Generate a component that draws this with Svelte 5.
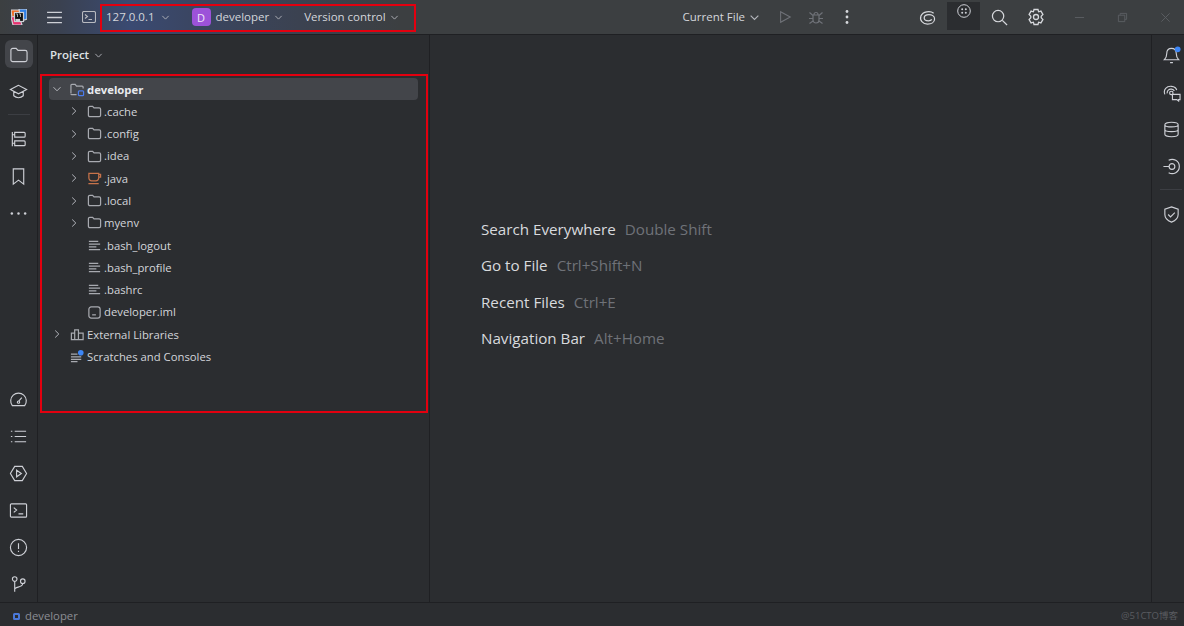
<script>
  const icons = {
    folder: 'M2 5.500a2 2 0 0 1 2-2h3.500l2 2.200H17a2 2 0 0 1 2 2v7.800a2 2 0 0 1-2 2H4a2 2 0 0 1-2-2z',
    learn: 'M10 3.500 1.500 8l8.500 4.500L18.500 8zM5 10.200v4.300c2.800 2.700 7.200 2.700 10 0v-4.300',
    structure: 'M3.500 2v15M3.500 5h2.500M3.500 14h2.500M6 2.500h10a1 1 0 0 1 1 1v3a1 1 0 0 1-1 1H6zM6 11.500h10a1 1 0 0 1 1 1v3a1 1 0 0 1-1 1H6z',
    bookmark: 'M4.500 2h11v16L10 13.800 4.500 18z',
    gauge: 'M3.500 16.500a8.200 8.200 0 1 1 13 0zM10.500 11.500l3-3.500M8.800 12.800a1.200 1.200 0 1 0 2.400 0a1.200 1.200 0 1 0-2.400 0',
    list: 'M6 4.500h12M6 10h12M6 15.500h12M2 4.500h1.500M2 10h1.500M2 15.500h1.500',
    service: 'M6 2.500h8l4.500 7.500-4.500 7.500H6L1.500 10zM8 6.500l5 3.500-5 3.500z',
    terminal: 'M2.500 3h15a1 1 0 0 1 1 1v12a1 1 0 0 1-1 1h-15a1 1 0 0 1-1-1V4a1 1 0 0 1 1-1zM5 7l3 2.500L5 12M10 13.500h5',
    problem: 'M1.500 10a8.500 8.500 0 1 0 17 0a8.500 8.500 0 1 0-17 0M10 5.500v6M10 13.500v1.200',
    git: 'M6 6.500v11M6 15c0-3 8.500-1.500 8.500-6M3.600 4.200a2.400 2.400 0 1 0 4.800 0a2.400 2.400 0 1 0-4.800 0M12.100 6.500a2.400 2.400 0 1 0 4.800 0a2.400 2.400 0 1 0-4.800 0',
    bell: 'M10 2.500c-3.500 0-5 2.500-5 5.500 0 3-1 5-2.500 6.500h15C16 13 15 11 15 8c0-3-1.500-5.500-5-5.500zM8.500 17.500h3',
    ai: 'M3 12C1 7 5 3 10 3.500c3 .3 5 2 5.500 4M5.500 11C5 8 7.500 6 10 6.500c1.500.3 2.500 1 3 2M8 10.500a1.800 1.800 0 1 0 3.600 0a1.800 1.800 0 1 0-3.600 0M11 12h8v5.500h-1.500v1.500l-2-1.500H11z',
    database: 'M3 5c0-3.500 14-3.500 14 0v10c0 3.500-14 3.500-14 0zM3 5c0 3 14 3 14 0M3 10c0 3 14 3 14 0',
    endpoint: 'M1.500 10h6M7.500 10a3 3 0 1 0 6 0 3 3 0 1 0-6 0M7 3.500a7.500 7.500 0 1 1 0 13',
    shield: 'M10 2l7 2.500V10c0 4-3 6.500-7 8-4-1.500-7-4-7-8V4.500zM6.500 10l2.500 2.500 4.500-4.500',
  }
  const upperLeft = ['folder', 'learn', null, 'structure', 'bookmark', 'more']
  const lowerLeft = ['gauge', 'list', 'service', 'terminal', 'problem', 'git']
  const rightTools = ['bell', 'ai', 'database', 'endpoint', null, 'shield']
  const tree = [
    { name: '.cache', kind: 'dir' },
    { name: '.config', kind: 'dir' },
    { name: '.idea', kind: 'dir' },
    { name: '.java', kind: 'java' },
    { name: '.local', kind: 'dir' },
    { name: 'myenv', kind: 'dir' },
    { name: '.bash_logout', kind: 'text' },
    { name: '.bash_profile', kind: 'text' },
    { name: '.bashrc', kind: 'text' },
    { name: 'developer.iml', kind: 'iml' },
  ]
  const hints = [
    ['Search Everywhere', 'Double Shift'],
    ['Go to File', 'Ctrl+Shift+N'],
    ['Recent Files', 'Ctrl+E'],
    ['Navigation Bar', 'Alt+Home'],
  ]
</script>

{#snippet chevron(cls)}
  <svg class="chev {cls}" viewBox="0 0 10 10"><path d="M1.500 3.200 5 6.800l3.500-3.600" /></svg>
{/snippet}

{#snippet tool(name)}
  <svg class="tool" viewBox="0 0 20 20">
    {#if name === 'more'}
      <circle class="solid" cx="3" cy="10" r="1.300" /><circle class="solid" cx="10" cy="10" r="1.300" /><circle class="solid" cx="17" cy="10" r="1.300" />
    {:else}
      <path d={icons[name]} />
    {/if}
    {#if name === 'bell'}
      <circle class="badge" cx="16.500" cy="3.500" r="3" />
    {/if}
  </svg>
{/snippet}

<div class="ide">
  <header class="titlebar">
    <div class="logo">
      <svg viewBox="0 0 16 16" width="16" height="16">
        <path d="M0 1h9v8H1z" fill="#f26b21" />
        <path d="M8 0h8v10l-6 2z" fill="#2f7fe6" />
        <path d="M0 8l8-1 3 9H2z" fill="#e8316f" />
        <rect x="3.500" y="3.500" width="9" height="9" fill="#111" />
        <rect x="5" y="10.500" width="3.500" height="1" fill="#ddd" />
        <path d="M5 5h1.500v3M8 5h1.500v3" stroke="#ddd" stroke-width=".7" fill="none" />
      </svg>
    </div>
    <svg class="burger" viewBox="0 0 16 14"><path d="M0 1.500h16M0 7h16M0 12.500h16" /></svg>
    <svg class="term" viewBox="0 0 14 12"><rect x=".5" y=".5" width="13" height="11" rx="1.500" /><path d="M3 3.500 5.500 5.500 3 7.500M6.500 8.500h3.500" /></svg>
    <span class="t host">127.0.0.1</span>{@render chevron('c-host')}
    <span class="avatar">D</span>
    <span class="t proj">developer</span>{@render chevron('c-proj')}
    <span class="t vcs">Version control</span>{@render chevron('c-vcs')}
    <span class="spring"></span>
    <span class="t run">Current File</span>{@render chevron('c-run')}
    <svg class="act play" viewBox="0 0 16 16"><path d="M3 2 14 8 3 14z" /></svg>
    <svg class="act bug" viewBox="0 0 16 16"><path d="M5 6h6v5a3 3 0 0 1-6 0zM6 5.500a2 2 0 0 1 4 0M1.500 3.500 5 6.500M14.500 3.500 11 6.500M1 9.500h4M15 9.500h-4M1.500 14.500 5 12M14.500 14.500 11 12" /></svg>
    <svg class="kebab" viewBox="0 0 4 16"><circle cx="2" cy="2.500" r="1.400" /><circle cx="2" cy="8" r="1.400" /><circle cx="2" cy="13.500" r="1.400" /></svg>
    <svg class="top swirl" viewBox="0 0 18 18"><path d="M15.500 4.500C12 1.500 4 2.500 2 7.500.5 12 4 16 9 16c4 0 7.500-2 7.500-5.500 0-3-3-4.500-6-4.500-3 0-5 1.500-5 3.500 0 2 2 3 4.500 3 1.800 0 3-.6 3.500-1.500" /></svg>
    <div class="plugin">
      <svg viewBox="0 0 14 14"><circle cx="7" cy="7" r="6.300" /><circle class="dot" cx="5.200" cy="5.200" r="1" /><circle class="dot" cx="8.800" cy="5.200" r="1" /><circle class="dot" cx="5.200" cy="8.800" r="1" /><circle class="dot" cx="8.800" cy="8.800" r="1" /></svg>
    </div>
    <svg class="top search" viewBox="0 0 18 18"><circle cx="7.500" cy="7.500" r="6" /><path d="M12 12l5 5" /></svg>
    <svg class="top gear" viewBox="0 0 18 18"><path d="M7 1.500h4l.6 2.300 2.300-.7 2 3.400-1.700 1.700v1.600l1.700 1.700-2 3.400-2.300-.7-.6 2.300H7l-.6-2.300-2.300.7-2-3.400L3.800 9.800V8.200L2.100 6.500l2-3.400 2.300.7z" /><circle cx="9" cy="9" r="2.500" /></svg>
    <div class="window">
      <svg viewBox="0 0 12 12"><path d="M1 6h10" /></svg>
      <svg viewBox="0 0 12 12"><path d="M3.500 3V1.500h7v6.500H8.500M1.500 3.500h7v7h-7z" /></svg>
      <svg viewBox="0 0 12 12"><path d="M1.500 1.500l9 9M10.500 1.500l-9 9" /></svg>
    </div>
  </header>

  <div class="body">
    <nav class="strip left">
      <div class="group">
        {#each upperLeft as name, i}
          {#if name}
            <span class="slot" class:active={i === 0}>{@render tool(name)}</span>
          {:else}
            <span class="divider"></span>
          {/if}
        {/each}
      </div>
      <div class="group">
        {#each lowerLeft as name}
          <span class="slot">{@render tool(name)}</span>
        {/each}
      </div>
    </nav>

    <aside class="project">
      <div class="panel-title"><b>Project</b>{@render chevron('c-panel')}</div>
      <div class="tree">
        <div class="row root">
          {@render chevron('c-root')}
          <svg class="ico module" viewBox="0 0 16 16"><path d="M1 12V3.500a1 1 0 0 1 1-1h3.500l1.500 2h6a1 1 0 0 1 1 1V7M1 12.500a1 1 0 0 0 1 1h5" /><rect x="9" y="9.500" width="5.500" height="5" rx="1" /></svg>
          <b>developer</b>
        </div>
        {#each tree as item}
          <div class="row child">
            {#if item.kind === 'dir' || item.kind === 'java'}
              {@render chevron('c-side')}
            {:else}
              <span class="no-chev"></span>
            {/if}
            {#if item.kind === 'dir'}
              <svg class="ico" viewBox="0 0 16 16"><path d="M1.500 4a1.500 1.500 0 0 1 1.500-1.500h3l1.500 1.700H13A1.500 1.500 0 0 1 14.500 5.700V12a1.500 1.500 0 0 1-1.500 1.500H3A1.500 1.500 0 0 1 1.500 12z" /></svg>
            {:else if item.kind === 'java'}
              <svg class="ico java" viewBox="0 0 16 16"><path d="M2 2.500h10.500v5a3 3 0 0 1-3 3h-4.500a3 3 0 0 1-3-3zM12.500 3.500h2v3h-2M1.500 13.500h11" /></svg>
            {:else if item.kind === 'text'}
              <svg class="ico" viewBox="0 0 16 16"><path d="M2 3.500h10M2 6.500h12M2 9.500h8M2 12.500h12" /></svg>
            {:else}
              <svg class="ico" viewBox="0 0 16 16"><rect x="2" y="2" width="12" height="12" rx="2.500" /><path d="M5.500 10.500h4" /></svg>
            {/if}
            <span>{item.name}</span>
          </div>
        {/each}
        <div class="row">
          {@render chevron('c-side')}
          <svg class="ico" viewBox="0 0 16 16"><path d="M1.500 6.500h3.500v7h-3.500zM5 3h4v10.500H5zM9 6.500h5v7H9z" /></svg>
          <span>External Libraries</span>
        </div>
        <div class="row">
          <span class="no-chev"></span>
          <svg class="ico" viewBox="0 0 16 16"><path d="M1 5.500h7M1 8.500h11M1 11h11M1 13.500h7" /><circle class="badge" cx="11.500" cy="4" r="3" /></svg>
          <span>Scratches and Consoles</span>
        </div>
      </div>
      <div class="note note-tree"></div>
    </aside>

    <main class="editor">
      {#each hints as [label, key]}
        <p><span class="label">{label}</span><span class="key">{key}</span></p>
      {/each}
    </main>

    <nav class="strip right">
      {#each rightTools as name}
        {#if name}
          <span class="slot">{@render tool(name)}</span>
        {:else}
          <span class="divider"></span>
        {/if}
      {/each}
    </nav>
  </div>

  <footer class="status">
    <span class="crumb"></span>
    <span>developer</span>
    <span class="mark">@51CTO博客</span>
  </footer>

  <div class="note note-top"></div>
</div>

<style>
  :global(body) {
    margin: 0;
    background: #2b2d30;
  }
  .ide {
    position: relative;
    display: flex;
    flex-direction: column;
    width: 1184px;
    height: 626px;
    overflow: hidden;
    background: #2b2d30;
    color: #dfe1e5;
    font: 12px/1 "Open Sans", "Noto Sans", "Noto Sans CJK SC", sans-serif;
  }
  svg {
    flex: none;
    fill: none;
    stroke: #ced0d6;
    stroke-width: 1.2;
  }
  .titlebar {
    display: flex;
    align-items: center;
    flex: none;
    height: 35px;
    box-sizing: border-box;
    border-bottom: 1px solid #1f2023;
    background: linear-gradient(90deg, #3c3f41 0, #3a4150 60px, #3a4a72 130px, #3a4560 200px, #3c3f41 400px);
    font-size: 11.500px;
  }
  .t { color: #d4d6db; white-space: nowrap; }
  .logo { display: flex; margin-left: 11px; }
  .burger { width: 15px; height: 13px; margin-left: 20px; stroke-width: 1.500; }
  .term { width: 14px; height: 12px; margin-left: 20px; stroke: #b8bac0; stroke-width: 1.100; }
  .host { margin-left: 10px; }
  .avatar {
    display: grid;
    place-items: center;
    width: 19px;
    height: 18px;
    margin-left: 22px;
    border-radius: 4px;
    background: #9c52d9;
    color: #efe6fa;
    font-size: 11px;
  }
  .proj { margin-left: 5px; }
  .vcs { margin-left: 21px; }
  .chev { width: 9px; height: 9px; stroke: #b4b6bc; stroke-width: 1; }
  .c-host { margin-left: 6px; }
  .c-proj { margin-left: 5px; }
  .c-vcs { margin-left: 4px; }
  .spring { flex: 1; }
  .c-run { width: 11px; height: 11px; margin-left: 4px; }
  .act { width: 14px; height: 14px; stroke: #6f7278; }
  .play { margin-left: 18px; }
  .bug { margin-left: 16px; width: 16px; height: 16px; }
  .kebab { width: 4px; height: 16px; margin-left: 21px; fill: #d6d8dc; stroke: none; }
  .top { width: 17px; height: 17px; stroke: #d6d8dc; stroke-width: 1.300; }
  .swirl { margin-left: 70px; }
  .plugin {
    display: flex;
    justify-content: center;
    align-items: flex-start;
    align-self: flex-start;
    box-sizing: border-box;
    width: 33px;
    height: 28px;
    margin: 2px 0 0 11px;
    padding-top: 2px;
    background: #2b2d30;
  }
  .plugin svg { width: 14px; height: 14px; stroke-width: 1; }
  .plugin .dot { fill: #ced0d6; stroke: none; }
  .search { margin-left: 11px; }
  .gear { margin-left: 19px; width: 18px; height: 18px; }
  .window { display: flex; gap: 32px; align-items: center; margin: 0 13px 0 29px; }
  .window svg { width: 11px; height: 11px; stroke: #5c5f64; stroke-width: 1; }

  .body { display: flex; flex: 1; min-height: 0; }
  .strip {
    display: flex;
    flex-direction: column;
    align-items: center;
    flex: none;
    box-sizing: border-box;
    background: #2b2d30;
  }
  .strip.left {
    width: 38px;
    justify-content: space-between;
    padding: 5px 0 4px;
    border-right: 1px solid #1f2023;
  }
  .strip.right {
    width: 33px;
    padding: 6px 0 0 6px;
    border-left: 1px solid #1f2023;
  }
  .group { display: flex; flex-direction: column; align-items: center; }
  .slot {
    display: grid;
    place-items: center;
    width: 28px;
    height: 28px;
    margin-bottom: 9px;
    border-radius: 6px;
  }
  .group:last-child .slot:last-child { margin-bottom: 0; }
  .slot.active { background: #43454a; }
  .tool { width: 19px; height: 19px; }
  .solid { fill: #ced0d6; stroke: none; }
  .badge { fill: #3d86f5; stroke: none; }
  .divider {
    width: 22px;
    height: 1px;
    margin: 0 0 10px;
    background: #3c3e43;
  }

  .project {
    position: relative;
    flex: none;
    width: 392px;
    box-sizing: border-box;
    border-right: 1px solid #1f2023;
  }
  .panel-title {
    display: flex;
    align-items: center;
    gap: 5px;
    height: 40px;
    margin-bottom: 3px;
    padding-left: 12px;
    font-size: 11.500px;
  }
  .panel-title b { font-weight: 600; }
  .tree { margin-left: 11px; width: 369px; }
  .row {
    display: flex;
    align-items: center;
    height: 22.300px;
    padding-left: 3px;
    white-space: nowrap;
    font-size: 11.300px;
    color: #d3d5da;
  }
  .row > .chev { width: 10px; height: 10px; margin-right: 8px; }
  .row > .c-side { transform: rotate(-90deg); }
  .no-chev { width: 10px; margin-right: 8px; flex: none; }
  .row.child { padding-left: 20px; }
  .root {
    box-sizing: border-box;
    border-radius: 4px;
    background: #43454a;
    color: #e8eaee;
  }
  .root b { font-weight: 700; }
  .ico { width: 15px; height: 15px; margin-right: 2px; stroke: #a8aab0; stroke-width: 1.300; }
  .java { stroke: #c7734a; }
  .module rect { stroke: #4b7bec; stroke-width: 1.300; }

  .editor {
    display: flex;
    flex-direction: column;
    flex: 1;
    gap: 0;
    padding: 176.500px 0 0 51px;
    background: #2b2d30;
  }
  .editor p {
    display: flex;
    align-items: center;
    height: 36.300px;
    margin: 0;
    font-size: 15.200px;
  }
  .label { color: #d8dade; }
  .key { margin-left: 9px; color: #6f7278; }

  .status {
    display: flex;
    align-items: center;
    flex: none;
    box-sizing: border-box;
    height: 24px;
    padding: 3px 0 0 13px;
    border-top: 1px solid #1f2023;
    background: #2b2d30;
    color: #8b8e94;
    font-size: 11.300px;
  }
  .crumb {
    width: 3px;
    height: 3px;
    margin-right: 5px;
    border: 2px solid #4a78d8;
    border-radius: 1.500px;
  }
  .mark { margin-left: auto; margin-right: 6px; font-size: 9.500px; color: #5a5c60; }

  .note { position: absolute; box-sizing: border-box; border: 2px solid #e3000f; pointer-events: none; }
  .note-top { left: 100px; top: 4px; width: 316px; height: 28px; }
  .note-tree { left: 2px; top: 39px; width: 388px; height: 339px; }
</style>
